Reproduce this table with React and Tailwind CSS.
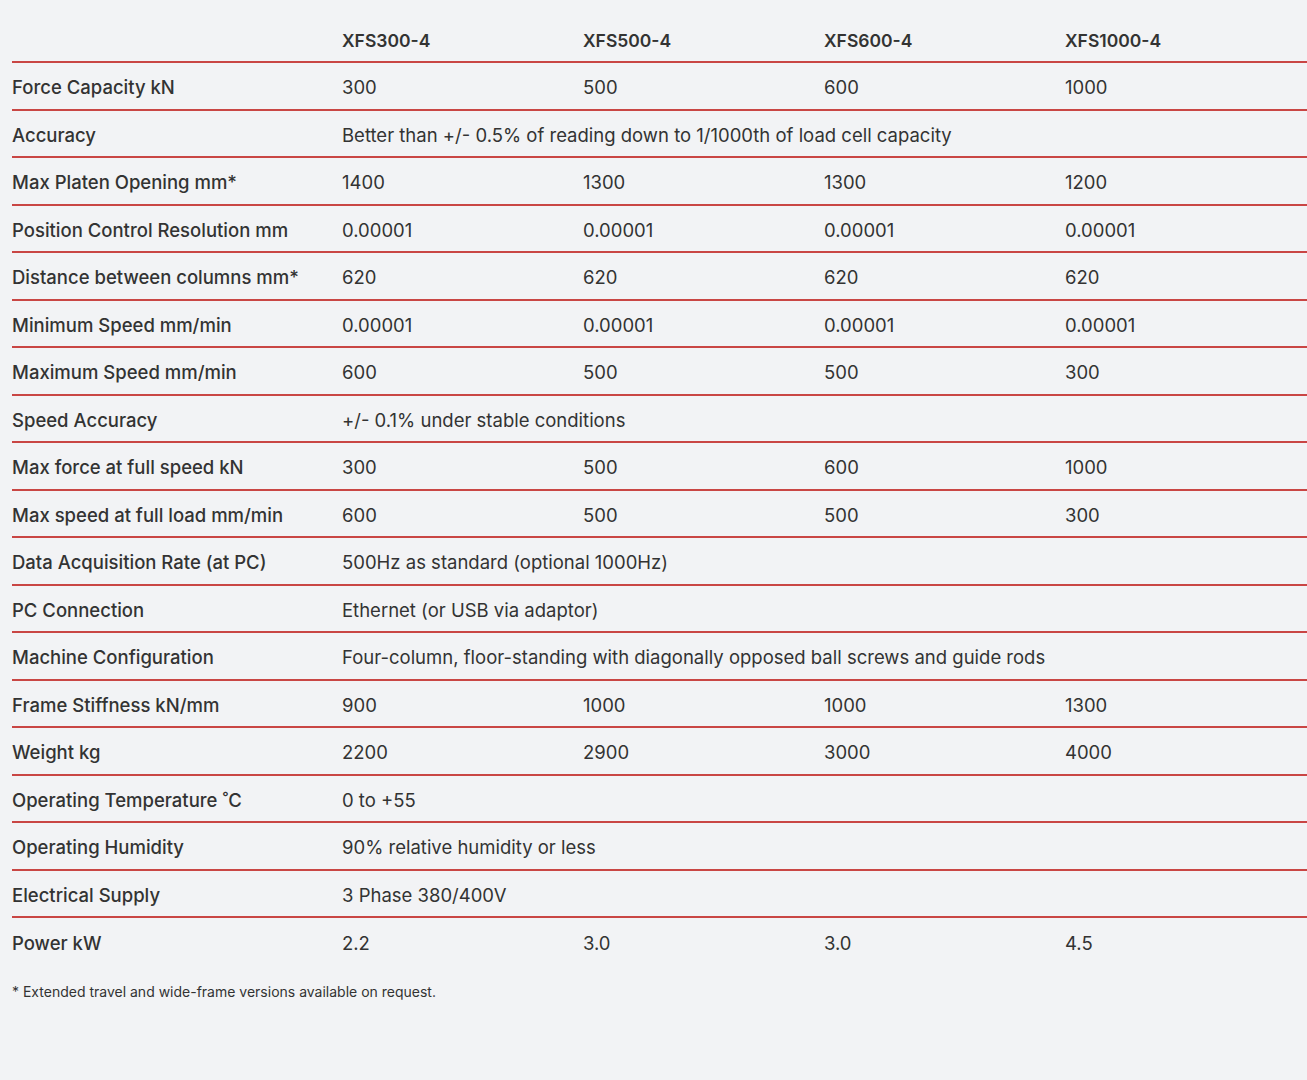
const MODELS = ['XFS300-4', 'XFS500-4', 'XFS600-4', 'XFS1000-4']

const ROWS = [
  ['Force Capacity kN', ['300', '500', '600', '1000']],
  ['Accuracy', 'Better than +/- 0.5% of reading down to 1/1000th of load cell capacity'],
  ['Max Platen Opening mm*', ['1400', '1300', '1300', '1200']],
  ['Position Control Resolution mm', ['0.00001', '0.00001', '0.00001', '0.00001']],
  ['Distance between columns mm*', ['620', '620', '620', '620']],
  ['Minimum Speed mm/min', ['0.00001', '0.00001', '0.00001', '0.00001']],
  ['Maximum Speed mm/min', ['600', '500', '500', '300']],
  ['Speed Accuracy', '+/- 0.1% under stable conditions'],
  ['Max force at full speed kN', ['300', '500', '600', '1000']],
  ['Max speed at full load mm/min', ['600', '500', '500', '300']],
  ['Data Acquisition Rate (at PC)', '500Hz as standard (optional 1000Hz)'],
  ['PC Connection', 'Ethernet (or USB via adaptor)'],
  ['Machine Configuration', 'Four-column, floor-standing with diagonally opposed ball screws and guide rods'],
  ['Frame Stiffness kN/mm', ['900', '1000', '1000', '1300']],
  ['Weight kg', ['2200', '2900', '3000', '4000']],
  ['Operating Temperature ˚C', '0 to +55'],
  ['Operating Humidity', '90% relative humidity or less'],
  ['Electrical Supply', '3 Phase 380/400V'],
  ['Power kW', ['2.2', '3.0', '3.0', '4.5']],
]

export default function App() {
  return (
    <div className="min-h-[1080px] bg-[#f2f3f5] pl-3 font-['Inter',sans-serif] text-[#333]">
      <div className="grid h-[63px] grid-cols-[330px_241px_241px_241px_241px] items-end border-b-2 border-[#c94644] pb-[7px] text-[17.5px] font-semibold">
        <div />
        {MODELS.map((m) => (
          <div key={m}>{m}</div>
        ))}
      </div>
      {ROWS.map(([label, vals], i) => (
        <div
          key={label}
          className={`grid h-[47.5px] grid-cols-[330px_241px_241px_241px_241px] items-center pt-[5px] text-[18.5px] ${
            i < ROWS.length - 1 ? 'border-b-2 border-[#c94644]' : ''
          }`}
        >
          <div className="font-medium">{label}</div>
          {Array.isArray(vals) ? (
            vals.map((v, j) => <div key={j}>{v}</div>)
          ) : (
            <div className="col-span-4">{vals}</div>
          )}
        </div>
      ))}
      <p className="mt-[15px] text-[14px]">* Extended travel and wide-frame versions available on request.</p>
    </div>
  )
}
